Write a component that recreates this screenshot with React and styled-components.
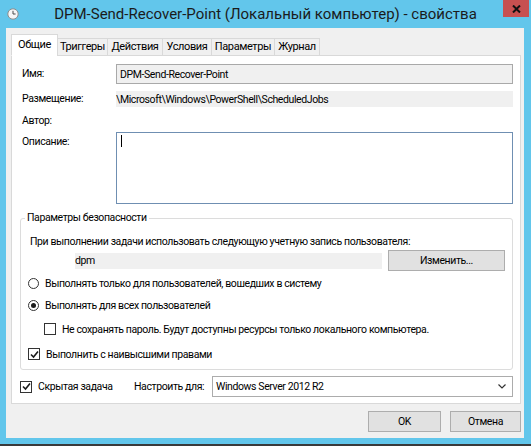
import React from "react";
import styled, { createGlobalStyle } from "styled-components";

const GlobalStyle = createGlobalStyle`
  html, body {
    margin: 0;
    padding: 0;
  }
  body {
    font-family: Roboto, "Noto Sans", sans-serif;
    font-size: 10.5px;
    letter-spacing: -0.4px;
    color: #000;
  }
`;

const Window = styled.div`
  width: 531px;
  height: 446px;
  box-sizing: border-box;
  background: #62c6eb;
  border-bottom: 2px solid #3a3a3a;
  display: flex;
  flex-direction: column;
`;

const TitleBar = styled.div`
  height: 28px;
  flex: none;
  display: grid;
  grid-template-columns: 1fr auto 1fr;
  align-items: center;
`;

const TitleIcon = styled.div`
  justify-self: start;
  padding-left: 7px;
  display: flex;
`;

const TitleText = styled.div`
  font-size: 15px;
  letter-spacing: 0;
  color: #1b1b1b;
  white-space: nowrap;
  padding-bottom: 1px;
`;

const CloseButton = styled.div`
  justify-self: end;
  align-self: start;
  width: 26px;
  height: 17px;
  margin-right: 2px;
  background: #c75050;
  display: flex;
  align-items: center;
  justify-content: center;
`;

const Body = styled.div`
  flex: 1;
  margin: 0 7px 6px 6px;
  background: #f0f0f0;
  padding: 6px 3px 6px 5px;
  display: flex;
  flex-direction: column;
`;

const TabStrip = styled.div`
  display: flex;
  align-items: flex-end;
  height: 22px;
  margin-bottom: -1px;
  position: relative;
  z-index: 1;
`;

const Tab = styled.div`
  box-sizing: border-box;
  width: ${(p) => p.$w}px;
  height: ${(p) => (p.$active ? 22 : 18)}px;
  padding-bottom: ${(p) => (p.$active ? 2 : 1)}px;
  margin-left: ${(p) => (p.$first ? 0 : -1)}px;
  display: flex;
  align-items: center;
  justify-content: center;
  background: ${(p) => (p.$active ? "#fff" : "#f0f0f0")};
  border: 1px solid #d9d9d9;
  border-bottom-color: ${(p) => (p.$active ? "#fff" : "#d9d9d9")};
  font-size: 11px;
  white-space: nowrap;
`;

const Panel = styled.div`
  flex: 1;
  background: #fff;
  border: 1px solid #d9d9d9;
  padding: 8px 7px 6px 8px;
  display: flex;
  flex-direction: column;
`;

const FieldRow = styled.div`
  display: grid;
  grid-template-columns: 94px 1fr;
  align-items: ${(p) => (p.$top ? "start" : "center")};
  height: ${(p) => p.$h}px;
  margin-top: ${(p) => p.$mt || 0}px;
  margin-left: 2px;
`;

const Label = styled.div`
  padding-top: ${(p) => p.$pt || 0}px;
  line-height: 16px;
`;

const NameBox = styled.div`
  box-sizing: border-box;
  height: 20px;
  background: #f0f0f0;
  border: 1px solid #a9a9a9;
  padding-left: 3px;
  display: flex;
  align-items: center;
`;

const PlainBox = styled.div`
  height: 16px;
  background: #f0f0f0;
  display: flex;
  align-items: center;
  white-space: nowrap;
`;

const TextArea = styled.div`
  box-sizing: border-box;
  height: 72px;
  background: #fff;
  border: 1px solid #6f8fb2;
  padding: 2px 4px;
`;

const Caret = styled.span`
  display: block;
  width: 1px;
  height: 12px;
  background: #000;
`;

const GroupBox = styled.fieldset`
  margin: 6px 0 0 0;
  padding: 0 7px 7px 7px;
  border: 1px solid #dcdcdc;
  border-radius: 3px;
  min-width: 0;
`;

const Legend = styled.legend`
  margin-left: -3px;
  padding: 0 2px;
  line-height: 16px;
`;

const Line = styled.div`
  line-height: 16px;
  margin-top: ${(p) => p.$mt || 0}px;
  margin-left: ${(p) => p.$ml || 0}px;
  white-space: nowrap;
`;

const UserRow = styled.div`
  display: flex;
  align-items: center;
  gap: 6px;
  height: 21px;
  margin-left: 2px;
`;

const UserField = styled.div`
  flex: 1;
  height: 16px;
  background: #f0f0f0;
  display: flex;
  align-items: center;
`;

const Redacted = styled.span`
  width: 45px;
  height: 16px;
  background: #fff;
  flex: none;
`;

const Button = styled.div`
  box-sizing: border-box;
  width: ${(p) => p.$w}px;
  height: 21px;
  background: #e1e1e1;
  border: 1px solid #adadad;
  display: flex;
  align-items: center;
  justify-content: center;
  white-space: nowrap;
`;

const OptionRow = styled.div`
  display: flex;
  align-items: center;
  gap: 6px;
  height: 16px;
  margin-top: ${(p) => p.$mt || 0}px;
  margin-left: ${(p) => p.$ml || 0}px;
  white-space: nowrap;
`;

const Radio = styled.span`
  box-sizing: border-box;
  width: 11px;
  height: 11px;
  border-radius: 50%;
  border: 1px solid #333;
  background: #fff;
  flex: none;
  display: flex;
  align-items: center;
  justify-content: center;

  &::after {
    content: "";
    width: 5px;
    height: 5px;
    border-radius: 50%;
    background: ${(p) => (p.$on ? "#1a1a1a" : "transparent")};
  }
`;

const Box = styled.span`
  box-sizing: border-box;
  width: 12px;
  height: 12px;
  border: 1px solid #333;
  background: #fff;
  flex: none;
  display: flex;
  align-items: center;
  justify-content: center;
`;

const BottomRow = styled.div`
  display: grid;
  grid-template-columns: 114px 78px 1fr;
  align-items: center;
  height: 21px;
  margin-top: 6px;
`;

const Combo = styled.div`
  box-sizing: border-box;
  height: 21px;
  border: 1px solid #acacac;
  background: #fff;
  padding: 0 6px 0 3px;
  display: flex;
  align-items: center;
  justify-content: space-between;
`;

const Footer = styled.div`
  display: flex;
  justify-content: flex-end;
  gap: 9px;
  margin-top: 7px;
`;

const Check = ({ on }) => (
  <Box>
    {on && (
      <svg width="9" height="9" viewBox="0 0 9 9">
        <path d="M1 4.5 L3.5 7 L8 1.5" fill="none" stroke="#1a1a1a" strokeWidth="1.6" />
      </svg>
    )}
  </Box>
);

const ClockIcon = () => (
  <svg width="12" height="12" viewBox="0 0 12 12">
    <circle cx="6" cy="6" r="5.2" fill="#f6f6f6" stroke="#8c8c8c" />
    <path d="M6 2.8 V6 H8.6" fill="none" stroke="#4a4a4a" strokeWidth="1" />
  </svg>
);

const tabs = [
  { name: "Общие", w: 47 },
  { name: "Триггеры", w: 51 },
  { name: "Действия", w: 56 },
  { name: "Условия", w: 50 },
  { name: "Параметры", w: 64 },
  { name: "Журнал", w: 46 },
];

export default function App() {
  return (
    <>
      <GlobalStyle />
      <Window>
        <TitleBar>
          <TitleIcon>
            <ClockIcon />
          </TitleIcon>
          <TitleText>DPM-Send-Recover-Point (Локальный компьютер) - свойства</TitleText>
          <CloseButton>
            <svg width="9" height="8" viewBox="0 0 9 8">
              <path d="M1 0.5 L8 7.5 M8 0.5 L1 7.5" stroke="#111" strokeWidth="2" />
            </svg>
          </CloseButton>
        </TitleBar>

        <Body>
          <TabStrip>
            {tabs.map((t, i) => (
              <Tab key={t.name} $w={t.w} $active={i === 0} $first={i === 0}>
                {t.name}
              </Tab>
            ))}
          </TabStrip>

          <Panel>
            <FieldRow $h={20}>
              <Label>Имя:</Label>
              <NameBox>DPM-Send-Recover-Point</NameBox>
            </FieldRow>
            <FieldRow $h={16} $mt={7}>
              <Label>Размещение:</Label>
              <PlainBox>\Microsoft\Windows\PowerShell\ScheduledJobs</PlainBox>
            </FieldRow>
            <FieldRow $h={16} $mt={6}>
              <Label>Автор:</Label>
              <div />
            </FieldRow>
            <FieldRow $h={72} $mt={3} $top>
              <Label $pt={2}>Описание:</Label>
              <TextArea>
                <Caret />
              </TextArea>
            </FieldRow>

            <GroupBox>
              <Legend>Параметры безопасности</Legend>
              <Line $mt={8} $ml={2}>
                При выполнении задачи использовать следующую учетную запись пользователя:
              </Line>
              <UserRow>
                <UserField>
                  <Redacted />
                  dpm
                </UserField>
                <Button $w={117}>Изменить...</Button>
              </UserRow>
              <OptionRow $mt={4}>
                <Radio />
                Выполнять только для пользователей, вошедших в систему
              </OptionRow>
              <OptionRow $mt={6}>
                <Radio $on />
                Выполнять для всех пользователей
              </OptionRow>
              <OptionRow $mt={8} $ml={16}>
                <Check />
                Не сохранять пароль. Будут доступны ресурсы только локального компьютера.
              </OptionRow>
              <OptionRow $mt={9}>
                <Check on />
                Выполнить с наивысшими правами
              </OptionRow>
            </GroupBox>

            <BottomRow>
              <OptionRow>
                <Check on />
                Скрытая задача
              </OptionRow>
              <Line>Настроить для:</Line>
              <Combo>
                Windows Server 2012 R2
                <svg width="8" height="5" viewBox="0 0 8 5">
                  <path d="M0.5 0.5 L4 4 L7.5 0.5" fill="none" stroke="#333" strokeWidth="1.2" />
                </svg>
              </Combo>
            </BottomRow>
          </Panel>

          <Footer>
            <Button $w={73}>OK</Button>
            <Button $w={71}>Отмена</Button>
          </Footer>
        </Body>
      </Window>
    </>
  );
}
